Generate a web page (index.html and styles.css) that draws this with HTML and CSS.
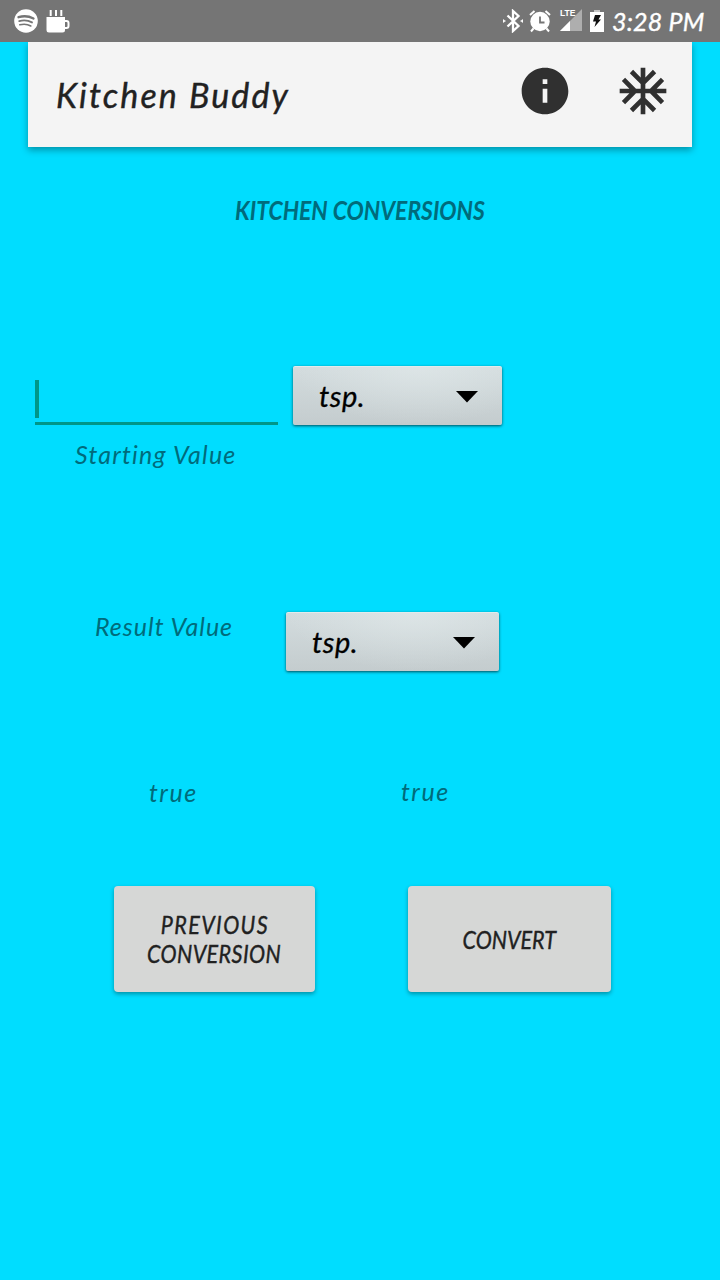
FILE: index.html
```html
<!DOCTYPE html>
<html lang="en">
<head>
<meta charset="utf-8">
<title>Kitchen Buddy</title>
<link rel="stylesheet" href="styles.css">
</head>
<body>
<div class="status">
  <div class="status-left">
    <svg width="24" height="24" viewBox="0 0 24 24"><circle cx="12" cy="12" r="11.8" fill="#fff"/><g fill="none" stroke="#757575" stroke-linecap="round"><path d="M4.5 8.2Q12.500 5.800 19.500 9.500" stroke-width="2.300"/><path d="M5.200 12.100Q12 10.100 18 13.400" stroke-width="1.900"/><path d="M5.800 15.800Q12 14.200 16.800 17" stroke-width="1.600"/></g></svg>
    <svg width="24" height="24" viewBox="0 0 24 24"><g fill="#fff"><path d="M3.700 1h2v6h-2zM9 1h2v6H9zM14.300 1h2v6h-2z"/><path d="M.5 8h18.500v13q0 2.500-2.500 2.500H3Q.5 23.500.5 21z"/></g><path d="M18 12h2.500q2 0 2 2v3q0 2-2 2H18" fill="none" stroke="#fff" stroke-width="2"/></svg>
  </div>
  <div class="status-right">
    <svg class="bt" width="20" height="24" viewBox="0 0 20 24"><path d="M4.500 6.500l11 10.500-5.500 5V2l5.500 5-11 10.500" fill="none" stroke="#fff" stroke-width="2.300"/><path d="M0 10.500l2.500 1.500L0 13.500zM20 10.500L17.500 12l2.500 1.500z" fill="#fff" stroke="#fff" stroke-width=".6"/></svg>
    <svg class="alarm" width="22" height="24" viewBox="0 0 22 24"><circle cx="11" cy="12.500" r="9.700" fill="#fff"/><path d="M1 6l4.500-4M21 6l-4.500-4M4.500 19.500l-2.500 3M17.500 19.500l2.500 3" stroke="#fff" stroke-width="2"/><path d="M11 7.500v6h4.500" fill="none" stroke="#757575" stroke-width="1.800"/></svg>
    <div class="signal"><span class="lte">LTE</span><svg width="22" height="22" viewBox="0 0 22 22"><path d="M22 0v22H0z" fill="#aeaeae"/><path d="M10 12v10H0z" fill="#fff"/></svg></div>
    <svg class="batt" width="14" height="22" viewBox="0 0 14 22"><path d="M4 0h6v2h4v20H0V2h4z" fill="#fff"/><path d="M4 0h6v2H4z" fill="#c5c5c5"/><path d="M5 5h6L8.500 9.500H11L4.500 17l1.500-5.500H3z" fill="#111"/></svg>
    <span class="clock">3:28 PM</span>
  </div>
</div>
<header class="bar">
  <h1 class="app-name">Kitchen Buddy</h1>
  <svg class="info" width="56" height="56" viewBox="0 0 24 24"><path fill="#303030" d="M12 2C6.480 2 2 6.480 2 12s4.480 10 10 10 10-4.480 10-10S17.520 2 12 2zm1 15h-2v-6h2v6zm0-8h-2V7h2v2z"/></svg>
  <svg width="56" height="56" viewBox="0 0 24 24"><path fill="#303030" d="M22 11h-4.170l3.240-3.240-1.410-1.420L15 11h-2V9l4.660-4.660-1.420-1.410L13 6.170V2h-2v4.170L7.760 2.930 6.340 4.340 11 9v2H9L4.340 6.340 2.930 7.760 6.170 11H2v2h4.170l-3.240 3.240 1.410 1.420L9 13h2v2l-4.660 4.660 1.420 1.410L11 17.830V22h2v-4.170l3.240 3.240 1.420-1.410L13 15v-2h2l4.660 4.660 1.410-1.420L17.830 13H22z"/></svg>
</header>
<main class="content">
  <h2 class="heading"><span class="heading-text">KITCHEN CONVERSIONS</span></h2>
  <section class="start-row">
    <div class="field"><span class="cursor"></span></div>
    <div class="spinner"><span class="unit">tsp.</span><svg width="22" height="12" viewBox="0 0 22 12"><path d="M0 0h22L11 11.500z"/></svg></div>
  </section>
  <div class="label start-label">Starting Value</div>
  <section class="result-row">
    <div class="label result-label">Result Value</div>
    <div class="spinner spinner-result"><span class="unit">tsp.</span><svg width="22" height="12" viewBox="0 0 22 12"><path d="M0 0h22L11 11.500z"/></svg></div>
  </section>
  <section class="flags"><span class="label flag">true</span><span class="label flag flag-right">true</span></section>
  <section class="actions">
    <div class="button"><span class="caption caption-previous">PREVIOUS</span><span class="caption caption-wide">CONVERSION</span></div>
    <div class="button button-convert"><span class="caption">CONVERT</span></div>
  </section>
</main>
</body>
</html>
```
FILE: styles.css
```css
* { box-sizing: border-box; }
body { margin: 0; height: 1280px; background: #00ddff; font-family: Lato, "Open Sans", sans-serif; font-style: italic; overflow: hidden; }
svg { display: block; flex: none; }
h1, h2 { margin: 0; font-weight: 400; }
.status { height: 42px; background: #757575; display: flex; justify-content: space-between; position: relative; z-index: 1; }
.status-left { display: flex; gap: 8px; padding: 9px 0 0 14px; }
.status-right { display: flex; align-items: flex-start; padding: 9px 16px 0 0; }
.alarm { margin-left: 6px; }
.signal { position: relative; margin-left: 9px; }
.lte { position: absolute; left: 0; top: 0; font: bold 8.5px/9px "Liberation Sans", sans-serif; color: #fff; }
.signal { margin-right: -1px; }
.batt { margin: 1px 0 0 9px; }
.clock { margin-left: 8px; width: 92px; font-size: 25px; line-height: 25px; letter-spacing: .2px; color: #fff; white-space: nowrap; -webkit-text-stroke: .4px; }
.bar { height: 105px; margin: 0 28px; padding: 0 21px 0 28px; background: #f4f4f4; display: flex; align-items: center; box-shadow: 0 3px 7px rgba(0,0,0,.35); }
.bar svg { margin-top: -7px; }
.app-name { flex: 1; font-size: 34px; line-height: 40px; letter-spacing: 2.1px; color: #212121; white-space: nowrap; -webkit-text-stroke: .4px; }
.info { margin-right: 42px; }
.heading { margin-top: 47px; height: 32px; display: flex; justify-content: center; font-size: 26px; line-height: 32px; font-weight: 700; color: #006b7b; white-space: nowrap; }
.heading-text { transform: scaleX(.88); }
.start-row { margin-top: 140px; padding-left: 35px; display: flex; align-items: flex-end; gap: 15px; }
.field { width: 243px; height: 45px; border-bottom: 3px solid #009688; }
.cursor { display: block; width: 4px; height: 38px; background: #009688; }
.spinner { width: 209px; height: 59px; padding: 0 24px 0 26px; display: flex; align-items: center; justify-content: space-between; border-radius: 2px; background: radial-gradient(ellipse at 60% 0, rgba(226,234,235,.65), rgba(210,218,220,0) 70%), linear-gradient(#d3dcde, #c4ccce); box-shadow: inset 0 1px #e3ebec, 0 1px 3px rgba(0,0,0,.65); color: #000; }
.spinner svg { margin-top: 3px; }
.unit { font-size: 29px; line-height: 36px; letter-spacing: .5px; -webkit-text-stroke: .3px; }
.start-label { margin: 13px 0 0 75px; letter-spacing: 1.2px; }
.label { font-size: 25px; line-height: 32px; height: 32px; color: #006b7b; white-space: nowrap; }
.result-row { margin-top: 142px; padding-left: 95px; display: flex; align-items: flex-start; }
.result-label { width: 191px; margin-top: -2px; letter-spacing: 1px; }
.spinner-result { width: 213px; }
.flags { display: flex; margin-top: 105px; padding-left: 149px; }
.flag { width: 252px; letter-spacing: 1.5px; }
.flag-right { margin-top: -1px; }
.actions { display: flex; gap: 93px; margin-top: 78px; padding-left: 114px; }
.button { width: 201px; height: 106px; display: flex; flex-direction: column; align-items: center; justify-content: center; background: #d6d7d6; border-radius: 4px; box-shadow: 0 2px 4px rgba(0,0,0,.35); color: #212121; }
.button-convert { width: 203px; }
.caption { font-size: 25px; line-height: 29px; transform: scaleX(.86); -webkit-text-stroke: .4px; }
.caption-previous { letter-spacing: 1.6px; }
.caption-wide { letter-spacing: .5px; }
```
